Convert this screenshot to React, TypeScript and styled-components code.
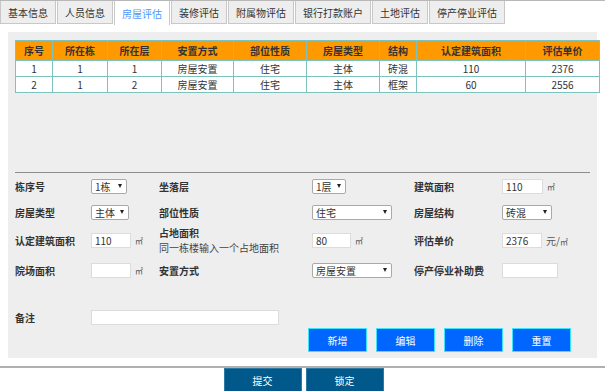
import React from "react";
import styled, { createGlobalStyle } from "styled-components";

const GlobalStyle = createGlobalStyle`
  body {
    margin: 0;
    background: #fff;
    font-family: "Noto Sans CJK SC", "Liberation Sans", sans-serif;
    font-size: 10px;
    color: #333;
  }
`;

const Page = styled.div`
  width: 605px;
  height: 391px;
  overflow: hidden;
`;

const TabBar = styled.div`
  display: flex;
  gap: 1px;
  border-top: 1px solid #b8b8b8;
  height: 24px;
`;

const Tab = styled.div<{ $active?: boolean }>`
  height: ${(p) => (p.$active ? "24px" : "22px")};
  padding: 0 7px;
  display: flex;
  align-items: center;
  border: 1px solid #c8c8c8;
  border-top: none;
  border-bottom: ${(p) => (p.$active ? "none" : "1px solid #c8c8c8")};
  background: ${(p) => (p.$active ? "#fff" : "#eeeeee")};
  color: ${(p) => (p.$active ? "#4d97ff" : "#333")};
  font-size: 10px;
`;

const Panel = styled.div`
  margin: 7px 8px 0;
  height: 326px;
  box-sizing: border-box;
  background: #eeeeee;
  padding: 8px 7px 0;
`;

const Table = styled.table`
  width: 575px;
  border-collapse: collapse;
  border: 1px solid #7cc3c0;
  table-layout: fixed;
`;

const Th = styled.th<{ $w: number }>`
  width: ${(p) => p.$w}px;
  height: 19px;
  padding: 0;
  background: #ff9900;
  border: 1px solid #7cc3c0;
  font-weight: bold;
  font-size: 10px;
  color: #333;
`;

const Td = styled.td`
  height: 15px;
  padding: 0;
  background: #fff;
  border: 1px solid #7cc3c0;
  text-align: center;
  font-size: 10px;
  line-height: 14px;
  color: #333;
`;

const Divider = styled.div`
  margin-top: 79px;
  border-top: 1px solid #8c8c8c;
`;

const FormGrid = styled.div`
  display: grid;
  grid-template-columns: 76px 68px 153px 102px 88px auto;
  grid-template-rows: 26px 26px 30px 30px;
  align-items: center;
`;

const Label = styled.div`
  font-weight: bold;
  font-size: 10px;
  line-height: 15px;
  color: #333;
`;

const Hint = styled.div`
  font-size: 10px;
  color: #444;
  line-height: 15px;
`;

const LabelStack = styled.div`
  display: flex;
  flex-direction: column;
`;

const FieldWrap = styled.div`
  display: flex;
  align-items: center;
  gap: 4px;
`;

const Input = styled.div<{ $w: number }>`
  width: ${(p) => p.$w}px;
  height: 15px;
  box-sizing: border-box;
  background: #fff;
  border: 1px solid #dcdcdc;
  padding: 0 3px;
  font-size: 10px;
  line-height: 13px;
  color: #333;
`;

const Unit = styled.span<{ $big?: boolean }>`
  font-size: ${(p) => (p.$big ? "10px" : "8px")};
  color: #555;
`;

const SelectBox = styled.div<{ $w: number }>`
  width: ${(p) => p.$w}px;
  height: 15px;
  box-sizing: border-box;
  background: #fff;
  border: 1px solid #a9a9a9;
  border-radius: 2px;
  padding: 0 4px 0 3px;
  display: flex;
  align-items: center;
  justify-content: space-between;
  font-size: 10px;
  color: #333;
`;

const Arrow = styled.span`
  width: 0;
  height: 0;
  border-left: 2.5px solid transparent;
  border-right: 2.5px solid transparent;
  border-top: 4px solid #222;
`;

const RemarkRow = styled.div`
  margin-top: 22px;
  display: grid;
  grid-template-columns: 76px auto;
  align-items: center;
  height: 20px;
`;

const ActionRow = styled.div`
  display: flex;
  gap: 9px;
  margin: 1px 0 0 293px;
`;

const ActionButton = styled.button`
  width: 59px;
  height: 24px;
  padding: 0;
  background: #0066ff;
  border: 1px solid #3ce3ff;
  color: #fff;
  font-family: inherit;
  font-size: 10px;
`;

const Footer = styled.div`
  margin-top: 8px;
  border-top: 2px solid #b0b0b0;
  display: flex;
  justify-content: center;
  gap: 4px;
  padding-left: 2px;
`;

const FooterButton = styled.button`
  width: 78px;
  height: 24px;
  padding: 0;
  background: #00598a;
  border: 1px solid #2f7aa3;
  color: #fff;
  font-family: inherit;
  font-size: 10px;
`;

const tabs = ["基本信息", "人员信息", "房屋评估", "装修评估", "附属物评估", "银行打款账户", "土地评估", "停产停业评估"];

const columns: [string, number][] = [
  ["序号", 36],
  ["所在栋", 54],
  ["所在层", 53],
  ["安置方式", 71],
  ["部位性质", 72],
  ["房屋类型", 72],
  ["结构", 36],
  ["认定建筑面积", 108],
  ["评估单价", 73],
];

const rows = [
  ["1", "1", "1", "房屋安置", "住宅", "主体", "砖混", "110", "2376"],
  ["2", "1", "2", "房屋安置", "住宅", "主体", "框架", "60", "2556"],
];

const Select: React.FC<{ w: number; value: string }> = ({ w, value }) => (
  <SelectBox $w={w}>
    <span>{value}</span>
    <Arrow />
  </SelectBox>
);

const App: React.FC = () => {
  return (
    <Page>
      <GlobalStyle />
      <TabBar>
        {tabs.map((t) => (
          <Tab key={t} $active={t === "房屋评估"}>
            {t}
          </Tab>
        ))}
      </TabBar>
      <Panel>
        <Table>
          <thead>
            <tr>
              {columns.map(([name, w]) => (
                <Th key={name} $w={w}>
                  {name}
                </Th>
              ))}
            </tr>
          </thead>
          <tbody>
            {rows.map((r, i) => (
              <tr key={i}>
                {r.map((c, j) => (
                  <Td key={j}>{c}</Td>
                ))}
              </tr>
            ))}
          </tbody>
        </Table>
        <Divider />
        <FormGrid>
          <Label>栋序号</Label>
          <Select w={36} value="1栋" />
          <Label>坐落层</Label>
          <Select w={34} value="1层" />
          <Label>建筑面积</Label>
          <FieldWrap>
            <Input $w={41}>110</Input>
            <Unit>㎡</Unit>
          </FieldWrap>

          <Label>房屋类型</Label>
          <Select w={38} value="主体" />
          <Label>部位性质</Label>
          <Select w={80} value="住宅" />
          <Label>房屋结构</Label>
          <Select w={50} value="砖混" />

          <Label>认定建筑面积</Label>
          <FieldWrap>
            <Input $w={40}>110</Input>
            <Unit>㎡</Unit>
          </FieldWrap>
          <LabelStack>
            <Label>占地面积</Label>
            <Hint>同一栋楼输入一个占地面积</Hint>
          </LabelStack>
          <FieldWrap>
            <Input $w={39}>80</Input>
            <Unit>㎡</Unit>
          </FieldWrap>
          <Label>评估单价</Label>
          <FieldWrap>
            <Input $w={40}>2376</Input>
            <Unit $big>
              元/<Unit>㎡</Unit>
            </Unit>
          </FieldWrap>

          <Label>院场面积</Label>
          <FieldWrap>
            <Input $w={40} />
            <Unit>㎡</Unit>
          </FieldWrap>
          <Label>安置方式</Label>
          <Select w={80} value="房屋安置" />
          <Label>停产停业补助费</Label>
          <Input $w={56} />
        </FormGrid>
        <RemarkRow>
          <Label>备注</Label>
          <Input $w={188} />
        </RemarkRow>
        <ActionRow>
          <ActionButton>新增</ActionButton>
          <ActionButton>编辑</ActionButton>
          <ActionButton>删除</ActionButton>
          <ActionButton>重置</ActionButton>
        </ActionRow>
      </Panel>
      <Footer>
        <FooterButton>提交</FooterButton>
        <FooterButton>锁定</FooterButton>
      </Footer>
    </Page>
  );
};

export default App;
